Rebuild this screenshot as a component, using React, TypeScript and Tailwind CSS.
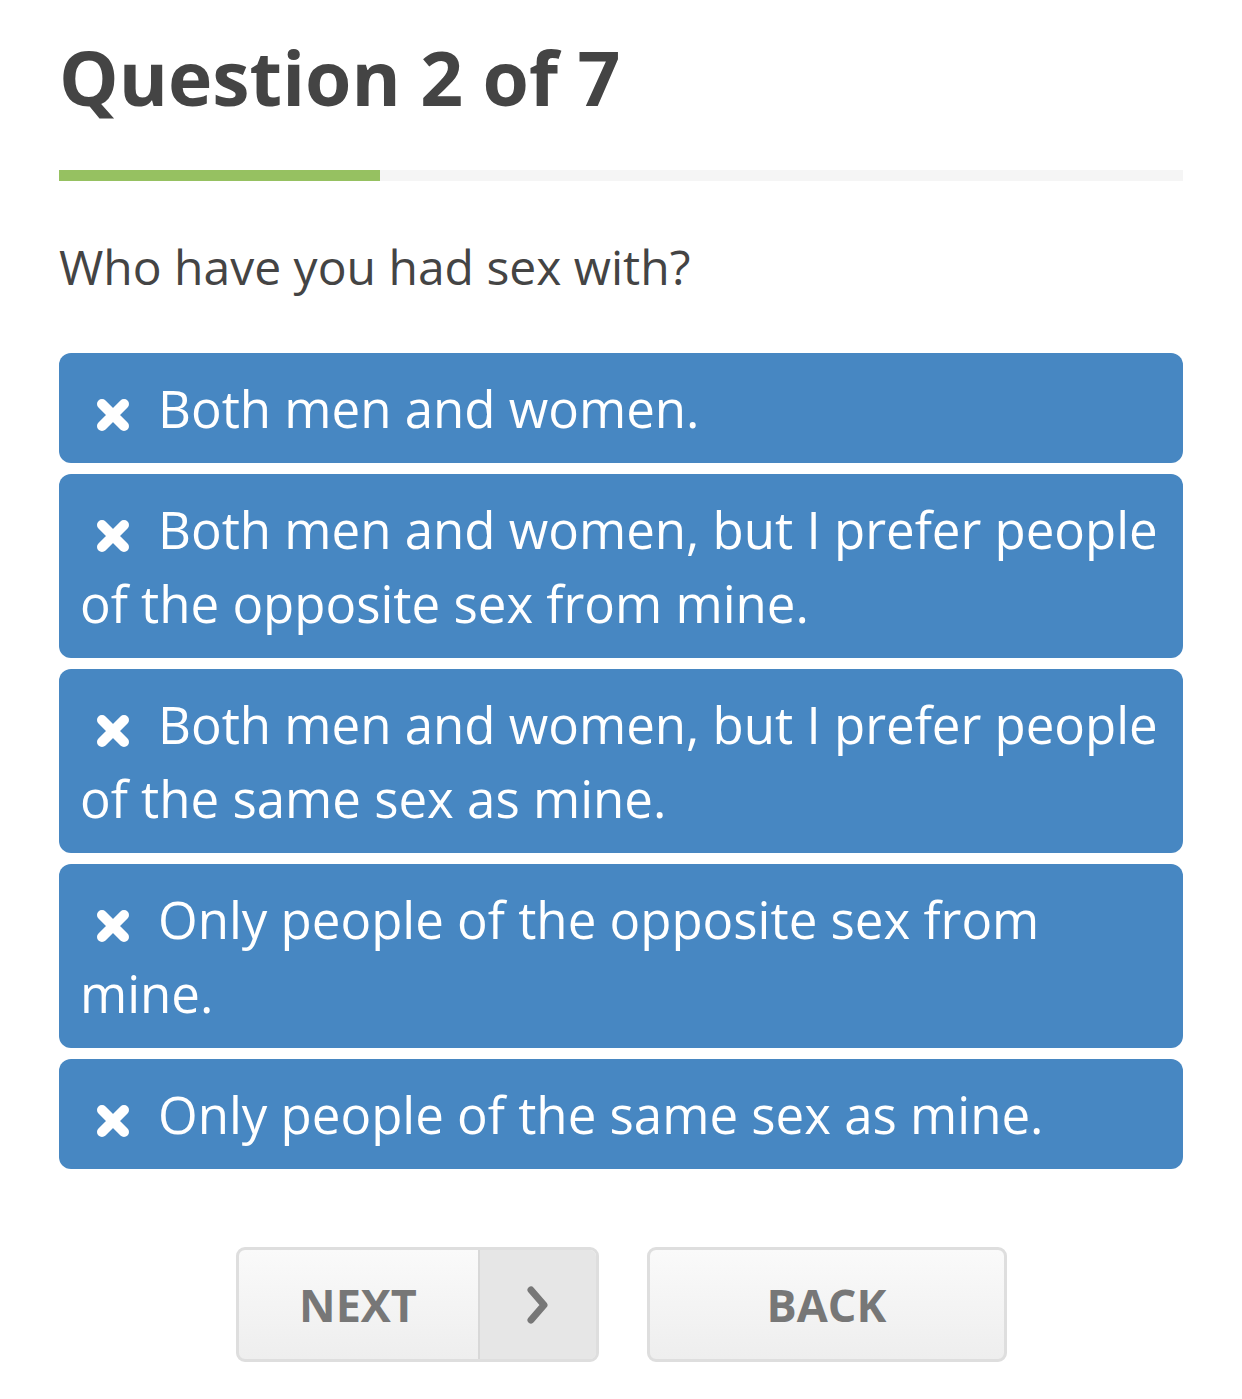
import React from "react";

const options = [
  "Both men and women.",
  "Both men and women, but I prefer people of the opposite sex from mine.",
  "Both men and women, but I prefer people of the same sex as mine.",
  "Only people of the opposite sex from mine.",
  "Only people of the same sex as mine.",
];

const CrossIcon: React.FC = () => (
  <svg
    viewBox="0 0 34 32"
    className="inline-block w-[34px] h-[32px] ml-[16px] mr-[28px] align-[-3px]"
  >
    <path
      d="M6 5 L28 27 M28 5 L6 27"
      stroke="white"
      strokeWidth="10"
      strokeLinecap="round"
      fill="none"
    />
  </svg>
);

const App: React.FC = () => {
  const current = 2;
  const total = 7;

  return (
    <div className="w-[1242px] min-h-[1399px] bg-white font-['Open_Sans',sans-serif] text-[#444444]">
      <div className="px-[59px] pt-[40px]">
        <h1 className="text-[75px] font-bold leading-none">
          Question {current} of {total}
        </h1>

        <div className="mt-[55px] h-[11px] w-full bg-[#f5f5f5]">
          <div
            className="h-full bg-[#96c161]"
            style={{ width: `${(current / total) * 100}%` }}
          />
        </div>

        <p className="mt-[62px] text-[48px] leading-none">
          Who have you had sex with?
        </p>

        <div className="mt-[62px] flex flex-col gap-[11px]">
          {options.map((option, index) => (
            <button
              key={index}
              className="w-full text-left bg-[#4787c2] text-white rounded-[12px] pl-[21px] pr-[18px] py-[18px] text-[51px] leading-[74px]"
            >
              <CrossIcon />
              {option}
            </button>
          ))}
        </div>

        <div className="mt-[78px] flex justify-center gap-[48px]">
          <button className="flex w-[363px] h-[115px] rounded-[9px] border-[3px] border-[#dedede] bg-gradient-to-b from-[#fafafa] to-[#eeeeee] overflow-hidden text-[#777777] font-bold text-[45px]">
            <span className="w-[239px] h-full flex items-center justify-center">
              NEXT
            </span>
            <span className="flex-1 h-full flex items-center justify-center bg-[#e6e6e6] border-l-[2px] border-[#d8d8d8]">
              <svg viewBox="0 0 26 40" className="w-[26px] h-[40px]">
                <path
                  d="M6 5 L19 20 L6 35"
                  stroke="#777777"
                  strokeWidth="7"
                  strokeLinecap="round"
                  strokeLinejoin="round"
                  fill="none"
                />
              </svg>
            </span>
          </button>
          <button className="flex items-center justify-center w-[360px] h-[115px] rounded-[9px] border-[3px] border-[#dedede] bg-gradient-to-b from-[#fafafa] to-[#eeeeee] text-[#777777] font-bold text-[45px]">
            BACK
          </button>
        </div>
      </div>
    </div>
  );
};

export default App;
